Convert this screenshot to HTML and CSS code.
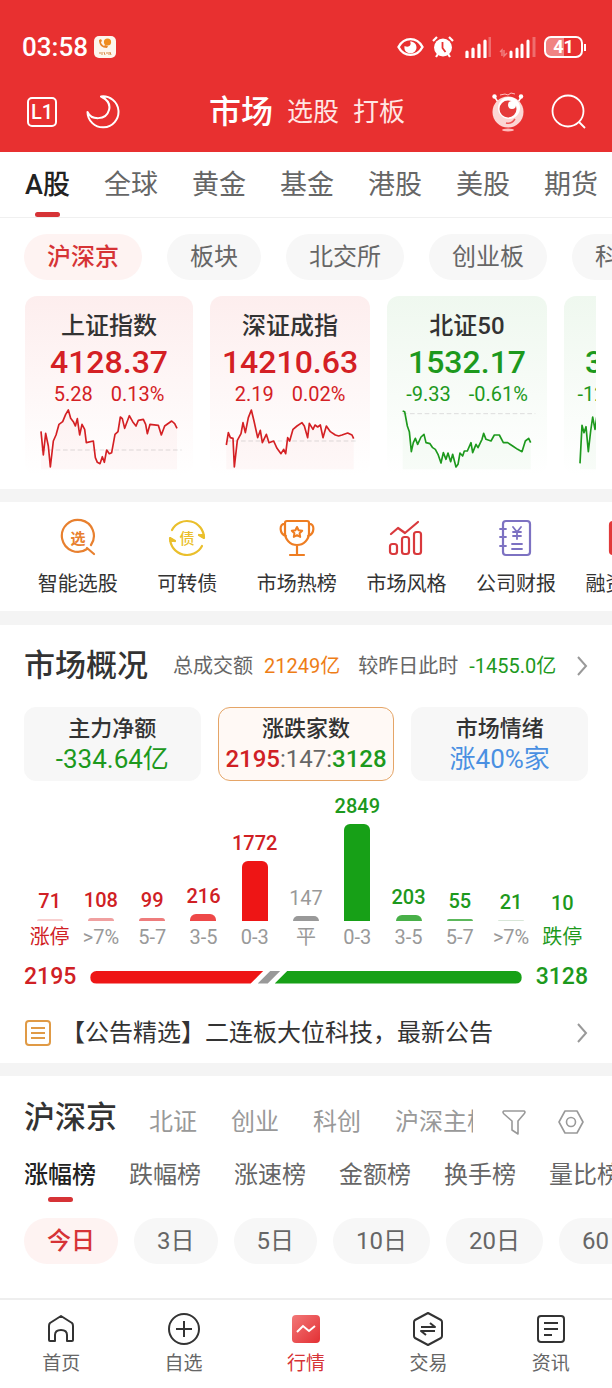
FILE: index.html
```html
<!DOCTYPE html>
<html lang="zh-CN">
<head>
    <meta charset="UTF-8">
    <meta name="viewport" content="width=device-width, initial-scale=1.0">
    <title>市场</title>
    <link rel="stylesheet" href="styles.css">
</head>
<body>
    <header class="header">
        <div class="status">
            <span class="clock">03:58</span>
            <svg class="app-icon" width="22" height="22" viewBox="0 0 22 22">
                <rect width="22" height="22" rx="5" fill="#fdf6ee"/>
                <path d="M5 4c0 5 3 8 8 8l1-2-3-1-1 1C8 9 7 7 7 6l1-1-1-2z" fill="#e8852a"/>
                <circle cx="13.500" cy="6" r="3.600" fill="#f08c1e"/>
                <path d="M5 17h2m1-1v3m2-3l1 3m1-2h2m1-1v3m1-3l1 3" stroke="#d98a45" fill="none"/>
            </svg>
            <div class="status-right">
                <svg width="27" height="20" viewBox="0 0 27 20">
                    <path d="M1.500 10C7-.5 20-.5 25.500 10C20 20.500 7 20.500 1.500 10z" fill="none" stroke="#fff" stroke-width="2.400"/>
                    <path d="M13 4.500C15 8 12 11 7.500 9C6 18 19 19 19.500 10.500C19.500 7 17 4.500 13 4.500z" fill="#fff"/>
                </svg>
                <svg width="22" height="22" viewBox="0 0 22 22">
                    <circle cx="11" cy="11.500" r="9" fill="#fff"/>
                    <path d="M1 5l4-4M21 5l-4-4M4 21l2-3M18 21l-2-3" stroke="#fff" stroke-width="2.200"/>
                    <path d="M10.500 6v6l3 4" fill="none" stroke="#e83030" stroke-width="1.800"/>
                </svg>
                <svg class="signal" width="27" height="22" viewBox="0 0 27 22">
                    <path d="M3 16v5M9 13v8M15 9v12M21 5v16" stroke="#fff" stroke-width="3.200" stroke-linecap="round"/>
                    <path d="M26 1v20" stroke="#fff" stroke-opacity=".3" stroke-width="3"/>
                </svg>
                <svg width="37" height="22" viewBox="0 0 37 22">
                    <path d="M1 16l2-2v6M5 14v6l3-3" fill="none" stroke="#fff" stroke-opacity=".4" stroke-width="1.400"/>
                    <path d="M12 16v5M18 13v8M23 9v12M29 5v16" stroke="#fff" stroke-width="3" stroke-linecap="round"/>
                    <path d="M35 1v20" stroke="#fff" stroke-opacity=".3" stroke-width="3"/>
                </svg>
                <span class="battery">41</span>
            </div>
        </div>
        <div class="nav">
            <div class="nav-left">
                <button class="icon-btn level" aria-label="L1">L1</button>
                <button class="icon-btn" aria-label="夜间模式">
                    <svg width="34" height="34" viewBox="0 0 34 34">
                        <path d="M15 1.500A15.500 15.500 0 1 1 1.500 17C5 25 20 26 23 15C25 8 20 4 15 1.500z" fill="none" stroke="#fff" stroke-width="2" stroke-linejoin="round"/>
                    </svg>
                </button>
            </div>
            <div class="nav-titles">
                <button class="nav-title active">市场</button>
                <button class="nav-title">选股</button>
                <button class="nav-title">打板</button>
            </div>
            <div class="nav-right">
                <button class="icon-btn" aria-label="助手">
                    <svg width="34" height="40" viewBox="0 0 34 40">
                        <path d="M3 4l4 6M31 4l-4 6" stroke="#fff" stroke-width="1.500"/>
                        <circle cx="3.500" cy="4.500" r="2.200" fill="#fff"/>
                        <circle cx="30" cy="4.500" r="2.200" fill="#fff"/>
                        <path d="M9 3l5-1 3 1 3-2 4 1" fill="none" stroke="#fbb" stroke-width="1"/>
                        <circle cx="17" cy="20" r="15.500" fill="#fcd6d4"/>
                        <circle cx="18" cy="16" r="11" fill="#fff"/>
                        <circle cx="17" cy="17" r="8.500" fill="#e53a3a"/>
                        <circle cx="21" cy="13" r="4" fill="#fff"/>
                        <path d="M15 31c4 1 7-1 9-4" fill="none" stroke="#e55" stroke-width="1.500"/>
                        <ellipse cx="17" cy="38" rx="6" ry="1.400" fill="#fbb"/>
                    </svg>
                </button>
                <button class="icon-btn" aria-label="搜索">
                    <svg width="36" height="36" viewBox="0 0 36 36" fill="none" stroke="#fff" stroke-width="1.800">
                        <circle cx="17" cy="17" r="15.500"/>
                        <path d="M28 28l6 6"/>
                    </svg>
                </button>
            </div>
        </div>
    </header>

    <main>
        <nav class="tabs">
            <button class="tab active">A股</button>
            <button class="tab">全球</button>
            <button class="tab">黄金</button>
            <button class="tab">基金</button>
            <button class="tab">港股</button>
            <button class="tab">美股</button>
            <button class="tab">期货</button>
        </nav>

        <div class="chips">
            <button class="chip active">沪深京</button>
            <button class="chip">板块</button>
            <button class="chip">北交所</button>
            <button class="chip">创业板</button>
            <button class="chip">科创板</button>
        </div>

        <div class="indices">
            <article class="index up first">
                <h3>上证指数</h3>
                <strong>4128.37</strong>
                <p><span>5.28</span><span>0.13%</span></p>
                <svg class="spark" viewBox="75 545 504 195">
                    <path class="base" d="M123 677H545"/>
                    <polygon points="123,621 130,692 137,627 145,665 151,728 160,650 168,632 177,600 188,592 197,570 205,557 212,582 220,592 226,605 232,583 239,632 246,600 254,615 259,655 280,650 286,700 292,714 300,718 307,697 313,714 320,677 328,688 335,685 345,630 354,622 361,578 367,583 374,612 388,574 398,592 408,605 415,588 430,585 437,600 442,628 450,600 475,603 484,632 494,605 515,590 524,598 531,612 531,735 123,735"/>
                    <polyline points="123,621 130,692 137,627 145,665 151,728 160,650 168,632 177,600 188,592 197,570 205,557 212,582 220,592 226,605 232,583 239,632 246,600 254,615 259,655 280,650 286,700 292,714 300,718 307,697 313,714 320,677 328,688 335,685 345,630 354,622 361,578 367,583 374,612 388,574 398,592 408,605 415,588 430,585 437,600 442,628 450,600 475,603 484,632 494,605 515,590 524,598 531,612"/>
                </svg>
            </article>
            <article class="index up">
                <h3>深证成指</h3>
                <strong>14210.63</strong>
                <p><span>2.19</span><span>0.02%</span></p>
                <svg class="spark" viewBox="629 545 480 195">
                    <path class="base" d="M678 650H1072"/>
                    <polygon points="678,662 684,625 690,640 698,642 702,728 711,648 722,628 728,595 735,625 744,580 753,557 761,590 772,640 780,618 786,655 798,630 806,655 820,650 830,672 842,688 850,675 856,688 862,640 868,650 878,615 890,605 905,595 912,605 922,640 927,597 938,615 944,602 952,608 960,602 968,640 978,605 990,622 1005,632 1015,635 1025,632 1042,626 1055,632 1060,643 1060,735 678,735"/>
                    <polyline points="678,662 684,625 690,640 698,642 702,728 711,648 722,628 728,595 735,625 744,580 753,557 761,590 772,640 780,618 786,655 798,630 806,655 820,650 830,672 842,688 850,675 856,688 862,640 868,650 878,615 890,605 905,595 912,605 922,640 927,597 938,615 944,602 952,608 960,602 968,640 978,605 990,622 1005,632 1015,635 1025,632 1042,626 1055,632 1060,643"/>
                </svg>
            </article>
            <article class="index down">
                <h3>北证50</h3>
                <strong>1532.17</strong>
                <p><span>-9.33</span><span>-0.61%</span></p>
                <svg class="spark" viewBox="243 545 480 195">
                    <path class="base" d="M290 568H688"/>
                    <polygon points="290,560 296,562 304,605 310,622 316,682 322,655 328,642 335,660 345,638 354,630 360,655 372,658 380,670 388,675 396,690 405,716 412,685 420,705 426,686 434,712 440,690 450,728 456,720 462,686 470,695 475,680 484,680 495,655 500,685 510,660 516,670 528,645 533,627 540,645 555,650 565,632 580,632 592,655 605,655 620,665 635,675 648,682 658,650 668,642 674,655 674,735 290,735"/>
                    <polyline points="290,560 296,562 304,605 310,622 316,682 322,655 328,642 335,660 345,638 354,630 360,655 372,658 380,670 388,675 396,690 405,716 412,685 420,705 426,686 434,712 440,690 450,728 456,720 462,686 470,695 475,680 484,680 495,655 500,685 510,660 516,670 528,645 533,627 540,645 555,650 565,632 580,632 592,655 605,655 620,665 635,675 648,682 658,650 668,642 674,655"/>
                </svg>
            </article>
            <article class="index down">
                <h3>创业板</h3>
                <strong>3319.27</strong>
                <p><span>-12.15</span><span>-0.37%</span></p>
                <svg class="spark" viewBox="772 545 480 195">
                    <polygon points="820,717 826,603 832,625 838,607 845,682 852,620 858,578 865,615 870,580 880,600 880,735 820,735"/>
                    <polyline points="820,717 826,603 832,625 838,607 845,682 852,620 858,578 865,615 870,580 880,600"/>
                </svg>
            </article>
        </div>

        <nav class="quick">
            <a href="#" class="quick-item">
                <svg width="40" height="40" viewBox="0 0 40 40" fill="none" stroke="#e8802f" stroke-width="2.200" stroke-linecap="round">
                    <path d="M29 31A16 16 0 1 1 33 27M29 30l7 6"/>
                    <text x="20" y="26" font-size="15" font-weight="bold" text-anchor="middle" fill="#e8802f" stroke="none">选</text>
                </svg>
                智能选股
            </a>
            <a href="#" class="quick-item">
                <svg width="40" height="40" viewBox="0 0 40 40" fill="none" stroke="#eabf2c" stroke-width="2.200" stroke-linecap="round" stroke-linejoin="round">
                    <path d="M5 12A17 17 0 0 1 37 20l-5-3M35 28A17 17 0 0 1 3 20l5 3"/>
                    <path d="M37 20v-4l-5 1zM3 20v4l5-1z" fill="#eabf2c" stroke-width="1"/>
                    <text x="20" y="26" font-size="15" font-weight="500" text-anchor="middle" fill="#eabf2c" stroke="none">债</text>
                </svg>
                可转债
            </a>
            <a href="#" class="quick-item">
                <svg width="40" height="40" viewBox="0 0 40 40" fill="none" stroke="#ee7d22" stroke-width="2.200" stroke-linecap="round" stroke-linejoin="round">
                    <path d="M10 3h20q2 0 2 2v10a12 12 0 0 1-24 0V5q0-2 2-2zM8 6c-6-1-6 10 1 12M32 6c6-1 6 10-1 12M20 27v10M13 37h14"/>
                    <path d="M20 9l1.600 3.300 3.600.5-2.600 2.500.6 3.600-3.200-1.700-3.200 1.700.6-3.600-2.600-2.500 3.600-.5z" stroke-width="2"/>
                </svg>
                市场热榜
            </a>
            <a href="#" class="quick-item">
                <svg width="40" height="40" viewBox="0 0 40 40" fill="none" stroke="#d9393c" stroke-width="2.200" stroke-linecap="round" stroke-linejoin="round">
                    <path d="M5 16l7-6 7 5L32 4"/>
                    <rect x="4" y="26" width="7" height="10" rx="2.500"/>
                    <rect x="16" y="19" width="7" height="17" rx="2.500"/>
                    <rect x="28" y="14" width="7" height="22" rx="2.500"/>
                </svg>
                市场风格
            </a>
            <a href="#" class="quick-item">
                <svg width="40" height="40" viewBox="0 0 40 40" fill="none" stroke="#7d72c2" stroke-width="2.200" stroke-linecap="round">
                    <rect x="7" y="3" width="27" height="34" rx="3"/>
                    <path d="M4 11h6M4 19h6M4 28h6M16 26h10M16 31h10M17 9l4 5 4-5M21 14v7M17 14h8M17 18h8" stroke-width="1.800"/>
                </svg>
                公司财报
            </a>
            <a href="#" class="quick-item">
                <svg width="40" height="40" viewBox="0 0 40 40" fill="none" stroke="#e23a3a" stroke-width="2.200">
                    <rect x="4" y="4" width="32" height="32" rx="3" fill="#e23a3a"/>
                </svg>
                融资融券
            </a>
        </nav>

        <section class="market">
            <div class="market-head">
                <h2>市场概况</h2>
                <span class="label">总成交额</span>
                <span class="orange">21249亿</span>
                <span class="label compare">较昨日此时</span>
                <span class="green">-1455.0亿</span>
                <a href="#" class="more" aria-label="更多">
                    <svg width="12" height="20" viewBox="0 0 12 20"><path d="M2 1l8 9-8 9"/></svg>
                </a>
            </div>

            <div class="boxes">
                <button class="box"><span>主力净额</span><b class="green">-334.64亿</b></button>
                <button class="box active"><span>涨跌家数</span><b class="ratio"><i class="red">2195</i>:147:<i class="green">3128</i></b></button>
                <button class="box"><span>市场情绪</span><b class="blue">涨40%家</b></button>
            </div>

            <div class="bars">
                <div class="col red"><span>71</span><i class="bar r1" style="height: 2px"></i><em class="red">涨停</em></div>
                <div class="col red"><span>108</span><i class="bar r2" style="height: 3px"></i><em>&gt;7%</em></div>
                <div class="col red"><span>99</span><i class="bar r3" style="height: 3px"></i><em>5-7</em></div>
                <div class="col red"><span>216</span><i class="bar r4" style="height: 7px"></i><em>3-5</em></div>
                <div class="col red"><span>1772</span><i class="bar r5" style="height: 60px"></i><em>0-3</em></div>
                <div class="col flat"><span>147</span><i class="bar" style="height: 5px"></i><em>平</em></div>
                <div class="col green"><span>2849</span><i class="bar g5" style="height: 97px"></i><em>0-3</em></div>
                <div class="col green"><span>203</span><i class="bar g4" style="height: 6px"></i><em>3-5</em></div>
                <div class="col green"><span>55</span><i class="bar g3" style="height: 2px"></i><em>5-7</em></div>
                <div class="col green"><span>21</span><i class="bar g2" style="height: 1px"></i><em>&gt;7%</em></div>
                <div class="col green"><span>10</span><i class="bar" style="height: 0px"></i><em class="green">跌停</em></div>
            </div>

            <div class="balance">
                <b class="red">2195</b>
                <div class="track">
                    <i class="part-up" style="flex-grow: 2195"></i>
                    <i class="part-flat"></i>
                    <i class="part-down" style="flex-grow: 3128"></i>
                </div>
                <b class="green">3128</b>
            </div>

            <a href="#" class="news">
                <svg width="28" height="28" viewBox="0 0 28 28" fill="none" stroke="#e09a45" stroke-width="2">
                    <rect x="2" y="2" width="24" height="24" rx="3"/>
                    <path d="M7 9h14M7 14h14M7 19h14"/>
                </svg>
                <span>【公告精选】二连板大位科技，最新公告</span>
                <svg class="arrow" width="12" height="20" viewBox="0 0 12 20"><path d="M2 1l8 9-8 9"/></svg>
            </a>
        </section>

        <section class="rank">
            <div class="rank-head">
                <h2>沪深京</h2>
                <div class="boards">
                    <button>北证</button>
                    <button>创业</button>
                    <button>科创</button>
                    <button>沪深主板</button>
                </div>
                <div class="tools">
                    <button class="icon-btn" aria-label="筛选">
                        <svg width="26" height="26" viewBox="0 0 26 26" fill="none" stroke="#999" stroke-width="1.600" stroke-linejoin="round">
                            <path d="M3 2h20q2 1 0 3l-6 7v13l-6-4v-9L3 5q-2-2 0-3z"/>
                        </svg>
                    </button>
                    <button class="icon-btn" aria-label="设置">
                        <svg width="26" height="26" viewBox="0 0 26 26" fill="none" stroke="#999" stroke-width="1.600" stroke-linejoin="round">
                            <path d="M7 2h12l6 11-6 11H7L1 13z"/>
                            <circle cx="13" cy="13" r="4.500"/>
                        </svg>
                    </button>
                </div>
            </div>
            <nav class="lists">
                <button class="list active">涨幅榜</button>
                <button class="list">跌幅榜</button>
                <button class="list">涨速榜</button>
                <button class="list">金额榜</button>
                <button class="list">换手榜</button>
                <button class="list">量比榜</button>
            </nav>
            <div class="chips days">
                <button class="chip active">今日</button>
                <button class="chip">3日</button>
                <button class="chip">5日</button>
                <button class="chip">10日</button>
                <button class="chip">20日</button>
                <button class="chip">60日</button>
            </div>
        </section>
    </main>

    <nav class="tabbar">
        <a href="#">
            <svg width="34" height="34" viewBox="0 0 34 34" fill="none" stroke="#333" stroke-width="2" stroke-linejoin="round">
                <path d="M5 14q0-2 1-3L17 4l11 7q1 1 1 3v14q0 1-1 1h-5v-6q0-5-6-5t-6 5v6H6q-1 0-1-1z"/>
            </svg>
            首页
        </a>
        <a href="#">
            <svg width="34" height="34" viewBox="0 0 34 34" fill="none" stroke="#333" stroke-width="2">
                <circle cx="17" cy="17" r="15"/>
                <path d="M17 9v16M9 17h16"/>
            </svg>
            自选
        </a>
        <a href="#" class="active">
            <svg width="34" height="34" viewBox="0 0 34 34" fill="none">
                <defs>
                    <linearGradient id="tile" x1="0" y1="0" x2="1" y2="1">
                        <stop offset="0" stop-color="#f27878"/>
                        <stop offset="1" stop-color="#e32f33"/>
                    </linearGradient>
                </defs>
                <rect x="3" y="3" width="28" height="28" rx="4" fill="url(#tile)"/>
                <path d="M8 20l6-6 6 5 6-5" stroke="#fff" stroke-width="2"/>
            </svg>
            行情
        </a>
        <a href="#">
            <svg width="34" height="34" viewBox="0 0 34 34" fill="none" stroke="#333" stroke-width="2" stroke-linejoin="round">
                <path d="M17 1l13 7q1 1 1 2v14q0 1-1 2l-13 7-13-7q-1-1-1-2V10q0-1 1-2z"/>
                <path d="M10 15h14l-5-4M24 19H10l5 4"/>
            </svg>
            交易
        </a>
        <a href="#">
            <svg width="34" height="34" viewBox="0 0 34 34" fill="none" stroke="#333" stroke-width="2">
                <rect x="4" y="4" width="26" height="26" rx="3"/>
                <path d="M10 11h14M10 17h14M10 23h8"/>
            </svg>
            资讯
        </a>
    </nav>
</body>
</html>
```
FILE: styles.css
```css
* {
    box-sizing: border-box;
}

body {
    margin: 0;
    min-height: 100vh;
    display: flex;
    flex-direction: column;
    background: #fff;
    color: #333;
    font-family: Roboto, "Noto Sans CJK SC", sans-serif;
    font-size: 20px;
    line-height: 24px;
    overflow-x: hidden;
}

main {
    flex: 1;
}

button {
    border: 0;
    padding: 0;
    background: none;
    color: inherit;
    font: inherit;
    white-space: nowrap;
    flex: none;
    cursor: pointer;
}

a {
    color: inherit;
    text-decoration: none;
}

h2,
h3,
p {
    margin: 0;
}

i,
em {
    font-style: normal;
}

svg {
    display: block;
    flex: none;
}

.red {
    color: #d02024;
}

.green {
    color: #1d991d;
}

.orange {
    color: #ee7d16;
}

.blue {
    color: #4a90e2;
}

/* header */
.header {
    background: #e83030;
    color: #fff;
    height: 152px;
    padding-top: 32px;
}

.status {
    display: flex;
    align-items: center;
    gap: 6px;
    height: 30px;
    padding: 0 25px 0 22px;
}

.clock {
    font-size: 26px;
    font-weight: 500;
}

.status-right {
    display: flex;
    align-items: center;
    gap: 8px;
    margin-left: auto;
}

.signal {
    margin-left: 2px;
}

.battery {
    position: relative;
    width: 39px;
    height: 22px;
    margin-right: 4px;
    border: 2px solid #fff;
    border-radius: 7px;
    background: linear-gradient(to right, #f08383 50%, #e83030 50%);
    font-size: 18px;
    line-height: 18px;
    font-weight: bold;
    text-align: center;
}

.battery::after {
    content: "";
    position: absolute;
    right: -5px;
    top: 6px;
    width: 2px;
    height: 7px;
    background: #fff;
}

.nav {
    display: grid;
    grid-template-columns: 1fr auto 1fr;
    align-items: center;
    height: 44px;
    margin-top: 28px;
    padding: 0 25px 0 27px;
}

.nav-left,
.nav-right {
    display: flex;
    align-items: center;
    gap: 29px;
}

.nav-right {
    justify-content: flex-end;
    gap: 26px;
}

.level {
    width: 30px;
    height: 30px;
    border: 2px solid #fff;
    border-radius: 5px;
    font-size: 20px;
    font-weight: 500;
}

.nav-titles {
    display: flex;
    align-items: center;
    gap: 14px;
}

.nav-title {
    font-size: 26px;
    line-height: 40px;
    color: #ffe6e4;
}

.nav-title.active {
    font-size: 32px;
    font-weight: 500;
    color: #fff;
}

/* top tabs */
.tabs {
    display: flex;
    gap: 34px;
    height: 66px;
    padding-left: 25px;
    border-bottom: 1px solid #f0f0f0;
    overflow: hidden;
}

.tab {
    position: relative;
    font-size: 27px;
    color: #666;
}

.tab.active,
.list.active {
    color: #222;
    font-weight: 500;
}

.tab.active::after,
.list.active::after {
    content: "";
    position: absolute;
    left: 50%;
    bottom: 0;
    width: 25px;
    height: 5px;
    margin-left: -12px;
    border-radius: 3px;
    background: #d63336;
}

.chips {
    display: flex;
    gap: 25px;
    padding: 16px 0 0 24px;
    overflow: hidden;
}

.chip {
    height: 46px;
    padding: 0 23px;
    border-radius: 23px;
    background: #f7f7f7;
    color: #666;
    font-size: 24px;
}

.chip.active {
    background: #fef3f2;
    color: #d63336;
    font-weight: 500;
}

/* index cards */
.indices {
    display: flex;
    gap: 17px;
    margin: 16px 16px 0 25px;
    padding-bottom: 14px;
    overflow: hidden;
}

.index {
    flex: 0 0 160px;
    height: 179px;
    padding-top: 14px;
    border-radius: 12px;
    text-align: center;
}

.index.first {
    flex-basis: 168px;
}

.index.up {
    color: #d42024;
    background: linear-gradient(#fdeeee, #fff);
}

.index.down {
    color: #1d991d;
    background: linear-gradient(#eff8ef, #fff);
}

.index h3 {
    font-size: 24px;
    line-height: 32px;
    font-weight: 500;
    color: #333;
}

.index strong {
    display: block;
    font-size: 32px;
    line-height: 40px;
    font-weight: 500;
}

.index p {
    display: flex;
    justify-content: center;
    gap: 18px;
    line-height: 24px;
}

.spark {
    width: 100%;
}

.spark polyline {
    fill: none;
    stroke: currentColor;
    stroke-width: 5;
    stroke-linejoin: round;
}

.spark polygon {
    fill: currentColor;
    opacity: .03;
}

.base {
    fill: none;
    stroke: #ddd;
    stroke-width: 3;
    stroke-dasharray: 14 8;
}

/* shortcuts */
.quick {
    display: flex;
    padding: 16px 0 13px 23px;
    border-top: 13px solid #f4f4f4;
    border-bottom: 14px solid #f4f4f4;
    overflow: hidden;
}

.quick-item {
    flex: 0 0 18.6%;
    display: flex;
    flex-direction: column;
    align-items: center;
    gap: 12px;
    line-height: 28px;
    white-space: nowrap;
}

/* market overview */
.market {
    padding: 0 24px;
    border-bottom: 13px solid #f4f4f4;
}

.market-head {
    display: flex;
    align-items: center;
    height: 82px;
    white-space: nowrap;
}

h2 {
    font-size: 31px;
    line-height: 40px;
    font-weight: 500;
}

.label {
    margin: 0 11px 0 25px;
    color: #666;
}

.compare {
    margin-left: 18px;
}

.more {
    margin-left: auto;
}

.more path,
.arrow path {
    fill: none;
    stroke: #999;
    stroke-width: 2;
}

.boxes {
    display: grid;
    grid-template-columns: repeat(3, 1fr);
    gap: 17px;
}

.box {
    display: flex;
    flex-direction: column;
    align-items: center;
    justify-content: center;
    height: 74px;
    border: 1px solid #f7f7f7;
    border-radius: 12px;
    background: #f7f7f7;
    font-size: 22px;
    line-height: 30px;
}

.box.active {
    border-color: #e5a567;
    background: #fff9f5;
}

.box span {
    font-weight: 500;
}

.box b {
    font-size: 26px;
    font-weight: 400;
}

.box .ratio {
    font-size: 24px;
    color: #666;
}

.ratio i {
    font-weight: 500;
}

.bars {
    display: grid;
    grid-template-columns: repeat(11, 1fr);
    align-items: end;
    height: 170px;
}

.col {
    display: flex;
    flex-direction: column;
    align-items: center;
    white-space: nowrap;
}

.col span {
    margin-bottom: 6px;
    font-weight: 500;
}

.col em {
    margin-top: 2px;
    line-height: 28px;
    color: #999;
}

.col em.red {
    color: #d02024;
}

.col em.green {
    color: #1d991d;
}

.flat {
    color: #999;
}

.flat span {
    font-weight: 400;
}

.bar {
    width: 26px;
    border-radius: 6px 6px 0 0;
    background: #999;
}

.r1 { background: #f8cfcf; }
.r2 { background: #f0a0a0; }
.r3 { background: #ee7c7c; }
.r4 { background: #ee4848; }
.r5 { background: #ee1515; }
.g2 { background: #d8e6d8; }
.g3 { background: #5cb85c; }
.g4 { background: #48b048; }
.g5 { background: #17a017; }

.balance {
    display: flex;
    align-items: center;
    gap: 14px;
    height: 52px;
    font-size: 23px;
}

.balance b {
    font-weight: 500;
}

.track {
    flex: 1;
    display: flex;
    height: 13px;
    border-radius: 7px;
    overflow: hidden;
}

.track i {
    flex: 1 1 0;
}

.part-up {
    background: #ee1515;
    clip-path: polygon(0 0, 100% 0, calc(100% - 13px) 100%, 0 100%);
}

.track .part-flat {
    flex: 0 0 23px;
    margin: 0 -6px;
    background: #999;
    clip-path: polygon(13px 0, 100% 0, calc(100% - 13px) 100%, 0 100%);
}

.part-down {
    background: #17a017;
    clip-path: polygon(13px 0, 100% 0, 100% 100%, 0 100%);
}

.news {
    display: flex;
    align-items: center;
    gap: 9px;
    height: 60px;
    font-size: 24px;
    white-space: nowrap;
}

.arrow {
    margin-left: auto;
}

/* ranking */
.rank {
    padding-bottom: 34px;
}

.rank-head {
    display: flex;
    align-items: center;
    height: 80px;
    padding: 4px 28px 0 24px;
}

.boards {
    flex: 1;
    display: flex;
    gap: 34px;
    min-width: 0;
    margin: 8px 28px 0 32px;
    overflow: hidden;
    color: #999;
    font-size: 24px;
    line-height: 36px;
}

.tools {
    display: flex;
    gap: 31px;
    margin-top: 8px;
}

.lists {
    display: flex;
    gap: 33px;
    height: 46px;
    padding-left: 24px;
    overflow: hidden;
}

.list {
    position: relative;
    padding-bottom: 8px;
    font-size: 24px;
    color: #666;
}

.days {
    gap: 16px;
}

/* bottom bar */
.tabbar {
    display: grid;
    grid-template-columns: repeat(5, 1fr);
    height: 90px;
    padding-top: 12px;
    border-top: 2px solid #eee;
    font-size: 19px;
    line-height: 28px;
    color: #666;
}

.tabbar a {
    display: flex;
    flex-direction: column;
    align-items: center;
    gap: 4px;
}

.tabbar .active {
    color: #d63336;
}
```
